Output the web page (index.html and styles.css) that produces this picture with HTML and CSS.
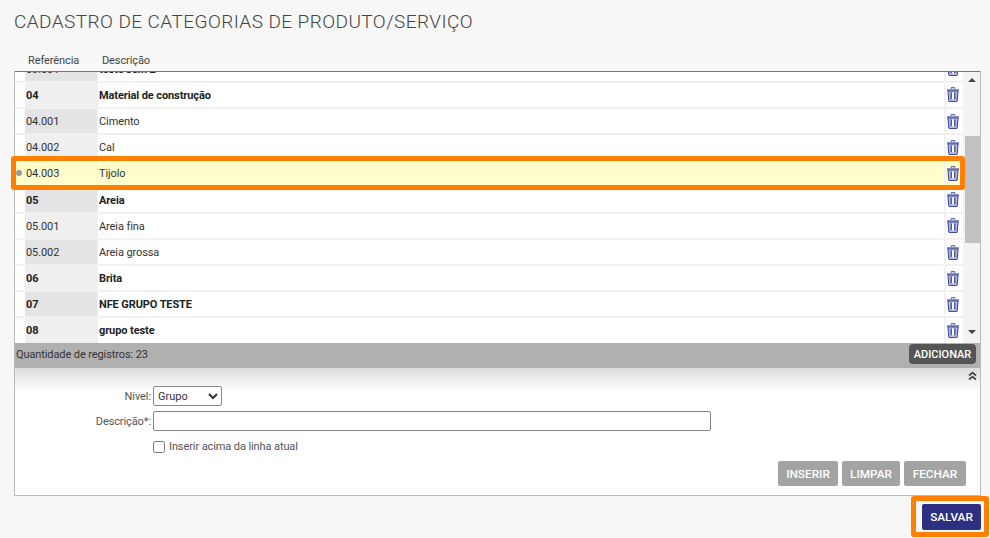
FILE: index.html
```html
<!DOCTYPE html>
<html lang="pt-br">
<head>
  <meta charset="UTF-8">
  <meta name="viewport" content="width=device-width, initial-scale=1.0">
  <title>Cadastro de Categorias</title>
  <link rel="stylesheet" href="styles.css">
</head>
<body>
  <svg class="icon-defs" width="0" height="0">
    <symbol id="trash" viewBox="0 0 12 15">
      <path d="M4.2 1.8V.7h3.6v1.1" fill="none" stroke="#3f4a9c"/>
      <path d="M0 2.3h12v1.4H0z" fill="#5a64ab"/>
      <path d="M1 4l.7 9.2c.1.8.6 1.3 1.3 1.3h6c.7 0 1.2-.5 1.3-1.3L11 4z" fill="#b9bedf" stroke="#3f4a9c" stroke-width="1.1"/>
      <path d="M4.2 5.6v6.6M7.8 5.6v6.6" stroke="#3f4a9c" stroke-width="1.3"/>
      <path d="M6 5.6v6.6" stroke="#fff" stroke-width="2"/>
    </symbol>
  </svg>

  <div class="page">
    <h1>Cadastro de categorias de produto/serviço</h1>

    <div class="grid-head">
      <span class="head-ref">Referência</span>
      <span>Descrição</span>
    </div>

    <div class="panel">
      <div class="grid-wrap">
        <div class="rows">
          <div class="row alt bold">
            <span class="dot"></span><span class="ref">03.001</span><span class="desc">teste sem 2</span>
            <span class="del"><svg class="trash"><use href="#trash"/></svg></span>
          </div>
          <div class="row group">
            <span class="dot"></span><span class="ref">04</span><span class="desc">Material de construção</span>
            <span class="del"><svg class="trash"><use href="#trash"/></svg></span>
          </div>
          <div class="row alt">
            <span class="dot"></span><span class="ref">04.001</span><span class="desc">Cimento</span>
            <span class="del"><svg class="trash"><use href="#trash"/></svg></span>
          </div>
          <div class="row">
            <span class="dot"></span><span class="ref">04.002</span><span class="desc">Cal</span>
            <span class="del"><svg class="trash"><use href="#trash"/></svg></span>
          </div>
          <div class="row selected">
            <span class="dot"><i></i></span><span class="ref">04.003</span><span class="desc">Tijolo</span>
            <span class="del"><svg class="trash"><use href="#trash"/></svg></span>
          </div>
          <div class="row alt group">
            <span class="dot"></span><span class="ref">05</span><span class="desc">Areia</span>
            <span class="del"><svg class="trash"><use href="#trash"/></svg></span>
          </div>
          <div class="row">
            <span class="dot"></span><span class="ref">05.001</span><span class="desc">Areia fina</span>
            <span class="del"><svg class="trash"><use href="#trash"/></svg></span>
          </div>
          <div class="row alt">
            <span class="dot"></span><span class="ref">05.002</span><span class="desc">Areia grossa</span>
            <span class="del"><svg class="trash"><use href="#trash"/></svg></span>
          </div>
          <div class="row group">
            <span class="dot"></span><span class="ref">06</span><span class="desc">Brita</span>
            <span class="del"><svg class="trash"><use href="#trash"/></svg></span>
          </div>
          <div class="row alt group">
            <span class="dot"></span><span class="ref">07</span><span class="desc">NFE GRUPO TESTE</span>
            <span class="del"><svg class="trash"><use href="#trash"/></svg></span>
          </div>
          <div class="row group">
            <span class="dot"></span><span class="ref">08</span><span class="desc">grupo teste</span>
            <span class="del"><svg class="trash"><use href="#trash"/></svg></span>
          </div>
        </div>

        <div class="scrollbar">
          <span class="arrow arrow-up"></span>
          <span class="thumb"></span>
          <span class="arrow arrow-down"></span>
        </div>

        <div class="row-frame"></div>
      </div>

      <div class="grid-foot">
        <span>Quantidade de registros: 23</span>
        <button class="btn-add">ADICIONAR</button>
      </div>

      <div class="form">
        <div class="collapse">
          <svg width="9" height="10" viewBox="0 0 9 10"><path d="M1 4.5l3.5-3 3.5 3M1 8.5l3.5-3 3.5 3" fill="none" stroke="#444" stroke-width="1.7"/></svg>
        </div>
        <div class="field field-nivel">
          <label>Nível:</label>
          <select><option>Grupo</option></select>
        </div>
        <div class="field field-desc">
          <label>Descrição*:</label>
          <input type="text">
        </div>
        <div class="field field-check">
          <label></label>
          <input type="checkbox" id="acima">
          <span>Inserir acima da linha atual</span>
        </div>
        <div class="form-actions">
          <button class="btn-gray btn-inserir">INSERIR</button>
          <button class="btn-gray btn-limpar">LIMPAR</button>
          <button class="btn-gray btn-fechar">FECHAR</button>
        </div>
      </div>
    </div>

    <div class="page-actions">
      <div class="save-frame">
        <button class="btn-save">SALVAR</button>
      </div>
    </div>
  </div>
</body>
</html>
```

FILE: styles.css
```css
* {
  margin: 0;
  padding: 0;
  box-sizing: border-box;
  font-family: Roboto, "Liberation Sans", Arial, sans-serif;
}

body {
  background-color: #f7f7f7;
  color: #333;
  font-size: 11px;
  letter-spacing: -0.1px;
  overflow: hidden;
}

.icon-defs {
  display: block;
  height: 0;
}

.page {
  width: 990px;
  height: 538px;
  padding: 0 9px 0 14px;
}

h1 {
  height: 53px;
  padding-top: 11px;
  font-size: 19px;
  line-height: 22px;
  font-weight: 300;
  color: #444;
  text-transform: uppercase;
  letter-spacing: 0.43px;
}

.grid-head {
  display: flex;
  height: 18px;
  padding-top: 1px;
  line-height: 14px;
  color: #444;
}

.head-ref {
  width: 88px;
  padding-left: 14px;
}

.panel {
  height: 425px;
  background-color: #fff;
  border: 1px solid #bbb;
  border-top: 0;
}

/* area da lista, a primeira linha fica cortada pelo scroll */
.grid-wrap {
  position: relative;
  display: flex;
  height: 272px;
  border-top: 1px solid #777;
}

.rows {
  flex: 1;
  height: 271px;
  overflow: hidden;
}

.row {
  display: flex;
  align-items: stretch;
  height: 26.2px;
  line-height: 25px;
  color: #333;
  border-bottom: 2px solid #f1f1f1;
}

.row:first-child {
  margin-top: -15.4px;
}

.dot {
  display: flex;
  align-items: center;
  justify-content: center;
  width: 10px;
  padding-right: 2px;
}

.dot i {
  width: 6px;
  height: 6px;
  border-radius: 50%;
  background-color: #999;
}

.ref {
  width: 72px;
  padding-left: 1px;
  background-color: #efefef;
  color: #333;
}

.alt .ref {
  background-color: #e4e4e4;
}

.desc {
  flex: 1;
  padding-left: 1px;
  border-left: 1px solid #f1f1f1;
}

.del {
  display: flex;
  align-items: center;
  justify-content: center;
  width: 19px;
  border-left: 2px solid #f1f1f1;
  padding-right: 4px;
}

.trash {
  width: 12px;
  height: 15px;
}

.group .ref,
.group .desc,
.bold .desc {
  font-weight: 700;
  color: #222;
}

.selected {
  background-color: #ffffcc;
}

.selected .ref {
  background-color: #ffffcc;
}

.scrollbar {
  display: flex;
  flex-direction: column;
  width: 17px;
  padding-left: 2px;
  background-color: #f3f3f3;
}

.arrow {
  width: 0;
  height: 0;
  margin: 6px 0 0 3px;
  border-left: 4px solid transparent;
  border-right: 4px solid transparent;
}

.arrow-up {
  border-bottom: 4px solid #444;
}

.arrow-down {
  margin-top: 87px;
  border-top: 4px solid #444;
}

.thumb {
  width: 15px;
  height: 107px;
  margin-top: 54px;
  background-color: #c1c1c1;
}

.row-frame {
  position: absolute;
  left: -4px;
  top: 84px;
  width: 954px;
  height: 34px;
  border: 5px solid #ff7f00;
  border-radius: 3px;
  pointer-events: none;
}

.grid-foot {
  display: flex;
  align-items: flex-start;
  justify-content: space-between;
  height: 25px;
  padding: 1px 4px 0 1px;
  line-height: 21px;
  background-color: #b0b0b0;
  color: #333;
}

.btn-add {
  width: 67px;
  height: 20px;
  background-color: #555;
  color: #fff;
  border: none;
  border-radius: 4px;
  font-size: 11px;
  font-weight: 500;
  cursor: pointer;
}

.form {
  height: 127px;
  background: linear-gradient(#dcdcdc, #fff 24px);
}

.collapse {
  display: flex;
  justify-content: flex-end;
  height: 18px;
  padding: 3px 3px 0 0;
}

.field {
  display: flex;
  align-items: center;
  color: #555;
}

.field label {
  width: 138px;
  text-align: right;
  padding-right: 2px;
}

.field select {
  width: 69px;
  height: 20px;
  font-size: 11px;
  color: #333;
  background-color: #fff;
  border: 1px solid #888;
  border-radius: 2px;
}

.field-desc {
  margin-top: 5px;
}

.field-desc input {
  width: 558px;
  height: 20px;
  border: 1px solid #888;
  border-radius: 2px;
  background-color: #fff;
}

.field-check {
  height: 15px;
  margin-top: 8px;
}

.field-check input {
  width: 12px;
  height: 12px;
  margin-right: 4px;
}

.form-actions {
  display: flex;
  justify-content: flex-end;
  gap: 4px;
  margin-top: 7px;
  padding-right: 14px;
}

.btn-gray {
  height: 25px;
  background-color: #a3a3a3;
  color: #fff;
  border: none;
  border-radius: 2px;
  font-size: 11.8px;
  font-weight: 500;
  cursor: pointer;
}

.btn-inserir {
  width: 60px;
}

.btn-limpar {
  width: 58px;
}

.btn-fechar {
  width: 62px;
}

.page-actions {
  display: flex;
  justify-content: flex-end;
  margin-right: -8px;
}

.save-frame {
  padding: 3px 3px 2px 6px;
  border: 5px solid #ff7f00;
  border-radius: 3px;
}

.btn-save {
  display: block;
  width: 59px;
  height: 26px;
  background-color: #2b3080;
  color: #fff;
  border: none;
  border-radius: 2px;
  font-size: 11.8px;
  font-weight: 500;
  cursor: pointer;
}
```
